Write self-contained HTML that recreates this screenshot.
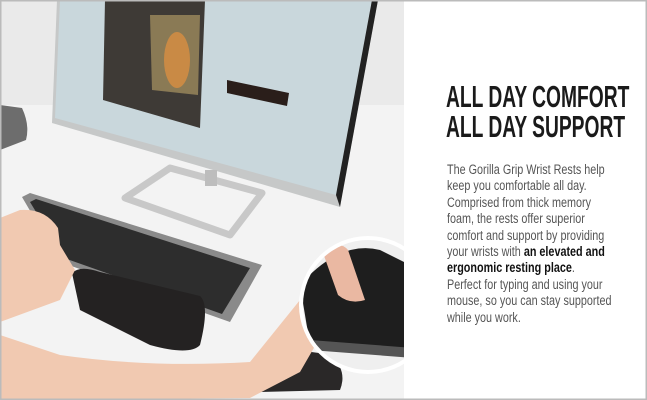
<!DOCTYPE html>
<html><head><style>
html,body{margin:0;padding:0;width:647px;height:400px;overflow:hidden;background:#fff}
.h{position:absolute;left:446px;top:82px;font-family:"Liberation Sans",sans-serif;font-weight:bold;font-size:31px;line-height:30px;color:#1a1a1a;transform:scaleX(0.62);transform-origin:0 0;white-space:nowrap}
.b{position:absolute;left:447px;top:162px;font-family:"Liberation Sans",sans-serif;font-size:13.5px;line-height:16.4px;color:#555;transform:scaleX(0.8);transform-origin:0 0;white-space:nowrap}
.b b{color:#111}
</style></head><body>
<svg width="647" height="400" style="position:absolute;left:0;top:0">
<rect x="0" y="0" width="405" height="400" fill="#f3f3f3"/>
<rect x="0" y="0" width="405" height="105" fill="#eaeaea"/>
<path d="M0 105 L22 108 Q30 125 26 140 L0 150 Z" fill="#6d6d6d"/>
<path d="M57 0 L378 0 L340 207 L52 123 Z" fill="#c6c8c8"/>
<path d="M60 0 L372 0 L336 195 L55 118 Z" fill="#c9d7dc"/>
<path d="M372 0 L378 0 L340 207 L336 195 Z" fill="#222"/>
<path d="M105 0 L205 0 L200 128 L103 100 Z" fill="#3e3a36"/>
<path d="M150 15 L200 15 L198 95 L152 90 Z" fill="#8a7a55"/>
<ellipse cx="177" cy="60" rx="13" ry="28" fill="#c98a45"/>
<path d="M227 80 L289 93 L287 106 L227 93 Z" fill="#2a1e1a"/>
<path d="M125 198 L170 168 L262 193 L230 235 Z" fill="none" stroke="#c8c8c8" stroke-width="7" stroke-linejoin="round"/>
<rect x="205" y="170" width="12" height="16" fill="#bdbdbd"/>
<path d="M22 197 L30 193 L262 265 L230 322 L60 262 Z" fill="#8a8a8a"/>
<path d="M30 202 L36 199 L250 268 L222 314 L64 258 Z" fill="#2d2d2d"/>
<path d="M72 273 Q80 265 100 272 L200 296 Q210 305 200 345 Q190 356 150 345 L80 310 Z" fill="#242222"/>
<path d="M258 358 Q280 345 330 355 Q348 370 340 390 L260 392 Z" fill="#2a2828"/>
<path d="M0 218 L20 210 Q45 208 58 228 L60 245 L75 270 L60 300 L0 322 Z" fill="#f1c9b1"/>
<path d="M0 335 L60 355 Q150 368 250 362 L300 300 L320 290 L330 320 L300 372 L250 398 L0 400 Z" fill="#f1c9b1"/>
<circle cx="368" cy="305" r="69" fill="#fff"/>
<circle cx="368" cy="305" r="65" fill="#efefef"/>
<clipPath id="c"><circle cx="368" cy="305" r="65"/></clipPath>
<g clip-path="url(#c)">
<path d="M300 285 Q340 240 380 250 L440 280 L440 350 L310 345 Z" fill="#1e1e1e"/>
<path d="M322 250 Q340 240 348 250 L365 300 Q350 305 338 295 Z" fill="#eab8a2"/>
<path d="M310 340 L440 350 L440 360 L310 350 Z" fill="#555"/>
</g>
<rect x="404" y="0" width="243" height="400" fill="#fff"/>
<rect x="0.75" y="0.75" width="645.5" height="398.5" fill="none" stroke="#bbb" stroke-width="1.5"/>
</svg>
<div class="h">ALL DAY COMFORT<br>ALL DAY SUPPORT</div>
<div class="b">The Gorilla Grip Wrist Rests help<br>keep you comfortable all day.<br>Comprised from thick memory<br>foam, the rests offer superior<br>comfort and support by providing<br>your wrists with <b>an elevated and</b><br><b>ergonomic resting place</b>.<br>Perfect for typing and using your<br>mouse, so you can stay supported<br>while you work.</div>
</body></html>
